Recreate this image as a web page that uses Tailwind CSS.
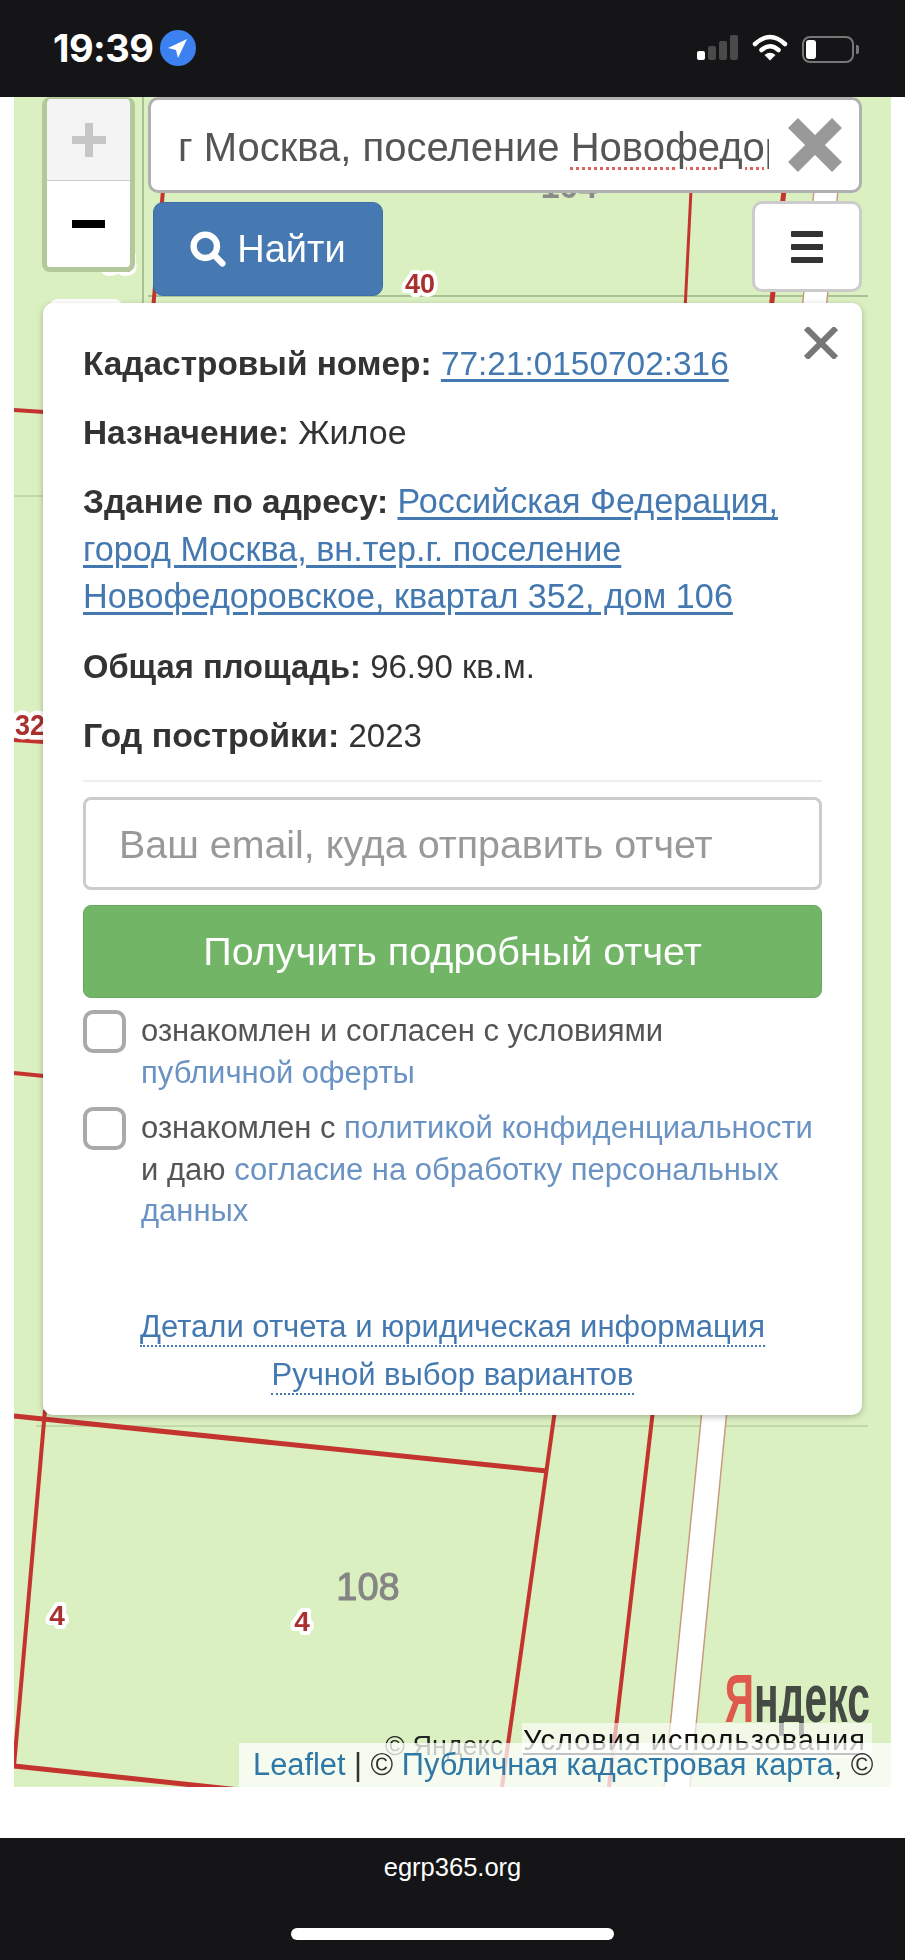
<!DOCTYPE html>
<html lang="ru">
<head>
    <meta charset="UTF-8">
    <meta name="viewport" content="width=device-width, initial-scale=1.0">
    <title>egrp365.org</title>
    <script src="https://cdn.jsdelivr.net/npm/@tailwindcss/browser@4"></script>
</head>
<body class="m-0 bg-white font-['Liberation_Sans',Arial,sans-serif]">
<div class="w-[905px] h-[1960px] overflow-hidden flex flex-col">

    <!-- status bar -->
    <div class="h-[97px] shrink-0 bg-[#151517] flex items-center pb-[1px] pl-[53px] pr-[46px] text-white">
        <span class="font-['Inter',sans-serif] font-bold text-[38px] leading-none tracking-[-0.5px]">19:39</span>
        <svg class="ml-[7px]" width="36" height="36" viewBox="0 0 36 36">
            <circle cx="18" cy="18" r="18" fill="#3b82f0"/>
            <path d="M8 18 L27 9 L18 28 L16 20 Z" fill="#fff"/>
        </svg>
        <div class="ml-auto flex items-center gap-[14px]">
            <div class="flex items-end gap-[3px] h-[26px] mt-[-2px]">
                <div class="w-[8px] h-[9px] rounded-[2px] bg-white"></div>
                <div class="w-[8px] h-[14px] rounded-[2px] bg-[#4a4a4a]"></div>
                <div class="w-[8px] h-[19px] rounded-[2px] bg-[#4a4a4a]"></div>
                <div class="w-[8px] h-[25px] rounded-[2px] bg-[#4a4a4a]"></div>
            </div>
            <svg width="36" height="28" viewBox="0 0 36 28" class="mt-[-2px]">
                <path d="M3 11 Q18 -3 33 11" fill="none" stroke="#fff" stroke-width="4.5" stroke-linecap="round"/>
                <path d="M9.5 17 Q18 9.5 26.5 17" fill="none" stroke="#fff" stroke-width="4.5" stroke-linecap="round"/>
                <path d="M12.5 22 Q18 17.5 23.5 22 L18 27.5 Z" fill="#fff"/>
            </svg>
            <div class="flex items-center gap-[2px] mt-[2px]">
                <div class="w-[52px] h-[27px] rounded-[8px] border-2 border-[#777] p-[2px]">
                    <div class="w-[10px] h-full rounded-[3px] bg-white"></div>
                </div>
                <div class="w-[3px] h-[9px] rounded-r-[2px] bg-[#777]"></div>
            </div>
        </div>
    </div>

    <!-- map -->
    <div class="relative mx-[14px] h-[1690px] shrink-0 overflow-hidden bg-[#dbf0c1]">
        <svg class="absolute inset-0" width="877" height="1690" viewBox="14 97 877 1690">
            <g stroke="#5e7a4e" stroke-width="1" opacity="0.8">
                <line x1="143" y1="97" x2="143" y2="303"/>
                <line x1="148" y1="296" x2="868" y2="296"/>
                <line x1="14" y1="496" x2="43" y2="496" opacity="0.5"/>
                <line x1="36" y1="1426" x2="868" y2="1426" opacity="0.5"/>
            </g>
            <!-- road -->
            <path d="M814 190 L838 190 L826 310 L802 310 Z" fill="#fff"/>
            <path d="M702 1410 L727 1410 L690 1787 L664 1787 Z" fill="#fff"/>
            <g stroke="#c89a80" stroke-width="1.5" fill="none">
                <line x1="814" y1="190" x2="802" y2="310"/>
                <line x1="838" y1="190" x2="826" y2="310"/>
                <line x1="702" y1="1410" x2="664" y2="1787"/>
                <line x1="727" y1="1410" x2="690" y2="1787"/>
            </g>
            <!-- parcels -->
            <g stroke="#c4342f" stroke-width="4" fill="none" class="blur-[0.6px]">
                <line x1="163" y1="190" x2="153" y2="310"/>
                <line x1="691" y1="190" x2="685" y2="310" stroke-width="3"/>
                <line x1="784" y1="190" x2="771" y2="310" stroke-width="5"/>
                <line x1="14" y1="410" x2="44" y2="412"/>
                <line x1="14" y1="740" x2="44" y2="742"/>
                <line x1="14" y1="1073" x2="44" y2="1076"/>
                <line x1="14" y1="1416" x2="547" y2="1471" stroke-width="5"/>
                <line x1="45" y1="1410" x2="14" y2="1766"/>
                <line x1="555" y1="1410" x2="502" y2="1787"/>
                <line x1="653" y1="1410" x2="609" y2="1787"/>
                <line x1="14" y1="1766" x2="240" y2="1790" stroke-width="5"/>
            </g>
            <!-- labels -->
            <g font-family="Liberation Sans, Arial, sans-serif" text-anchor="middle" font-weight="700" paint-order="stroke" class="blur-[0.4px]">
                <text x="569" y="198" font-size="34" fill="#8a8a8a">104</text>
                <text x="368" y="1600" font-size="38" font-weight="400" fill="#858585" stroke="#858585" stroke-width="1">108</text>
                <text x="420" y="293" font-size="28" fill="#a8302e" stroke="#fff" stroke-width="8" stroke-linejoin="round" textLength="30" lengthAdjust="spacingAndGlyphs">40</text>
                <text x="118" y="272" font-size="28" fill="#a8302e" stroke="#fff" stroke-width="8" stroke-linejoin="round">33</text>
                <text x="30" y="735" font-size="30" fill="#a8302e" stroke="#fff" stroke-width="9" stroke-linejoin="round" textLength="30" lengthAdjust="spacingAndGlyphs">32</text>
                <text x="57" y="1625" font-size="28" fill="#a8302e" stroke="#fff" stroke-width="8" stroke-linejoin="round">4</text>
                <text x="302" y="1631" font-size="28" fill="#a8302e" stroke="#fff" stroke-width="8" stroke-linejoin="round">4</text>
            </g>
            <rect x="50" y="299" width="72" height="12" rx="8" fill="#fff"/>
        </svg>

        <!-- attribution -->
        <div class="absolute right-[21px] top-[1557px] origin-right scale-x-[0.6] text-[68px] leading-[88px] font-bold whitespace-nowrap text-[#454a45] blur-[0.5px]"><span class="text-[#df5a4c]">Я</span>ндекс</div>
        <div class="absolute left-[371px] top-[1632px] text-[27px] leading-[34px] text-[#222] whitespace-nowrap">© Яндекс</div>
        <div class="absolute left-[508px] top-[1626px] w-[350px] h-[35px] bg-white/60 px-[1px] text-[29px] leading-[34px] tracking-[1px] text-[#111] whitespace-nowrap overflow-hidden"><span class="underline underline-offset-[3px]">Условия использования</span></div>
        <div class="absolute right-0 bottom-0 w-[652px] h-[44px] bg-white/75 pl-[14px] text-[30.8px] leading-[44px] text-[#333] whitespace-nowrap"><span class="text-[#2f78a6]">Leaflet</span> | © <span class="text-[#2f78a6]">Публичная кадастровая карта</span>, ©</div>

        <!-- controls over map -->
        <div class="relative pl-[28px] pr-[29px]">
            <div class="flex items-start">
                <div class="w-[93px] h-[175px] shrink-0 rounded-[8px] border-[5px] border-t-[2px] border-[#b3c99b] flex flex-col overflow-hidden">
                    <div class="h-[82px] bg-[#f4f4f4] border-b border-[#ccc] flex items-center justify-center">
                        <svg width="34" height="34" viewBox="0 0 34 34"><path d="M0 17 H34 M17 0 V34" stroke="#c6c6c6" stroke-width="8"/></svg>
                    </div>
                    <div class="flex-1 bg-white flex items-center justify-center">
                        <div class="w-[33px] h-[8px] bg-black"></div>
                    </div>
                </div>
                <div class="ml-[13px] flex-1 flex flex-col">
                    <div class="h-[96px] bg-white rounded-[10px] border-[3px] border-[#b0b0b0] flex items-center pl-[27px] pr-[17px]">
                        <div class="w-[591px] pt-[4px] overflow-hidden whitespace-nowrap text-[40px] leading-[50px] text-[#555]">г Москва, поселение <span class="underline decoration-dotted decoration-[#e0605a] decoration-[3px] underline-offset-[6px]">Новофедоровское</span></div>
                        <svg class="ml-auto" width="54" height="54" viewBox="0 0 54 54"><path d="M5 5 L49 49 M49 5 L5 49" stroke="#999" stroke-width="14"/></svg>
                    </div>
                    <div class="flex items-start justify-between mt-[8px]">
                        <button class="mt-[1px] ml-[5px] w-[230px] h-[94px] rounded-[10px] bg-[#4678b2] border border-[#3f6ea6] flex items-center justify-center gap-[11px] text-white text-[38px]">
                            <svg width="36" height="36" viewBox="0 0 40 40"><circle cx="17" cy="17" r="13" fill="none" stroke="#fff" stroke-width="7"/><path d="M27 27 L36 36" stroke="#fff" stroke-width="7" stroke-linecap="round"/></svg>
                            Найти
                        </button>
                        <button class="w-[110px] h-[91px] rounded-[10px] bg-white border-[3px] border-[#ccc] flex flex-col items-center justify-center gap-[7px]">
                            <span class="block w-[32px] h-[6px] rounded-[1px] bg-[#333]"></span>
                            <span class="block w-[32px] h-[6px] rounded-[1px] bg-[#333]"></span>
                            <span class="block w-[32px] h-[6px] rounded-[1px] bg-[#333]"></span>
                        </button>
                    </div>
                </div>
            </div>

            <!-- popup -->
            <div class="relative mt-[7px] ml-[1px] h-[1112px] rounded-[10px] bg-white shadow-[0_2px_6px_rgba(0,0,0,0.25)] px-[40px] pt-[37px] text-[#333]">
                <svg class="absolute right-[24px] top-[24px]" width="34" height="32" viewBox="0 0 34 32"><path d="M2 1 L32 31 M32 1 L2 31" stroke="#777" stroke-width="6"/></svg>
                <div class="text-[33.4px] leading-[47.5px] flex flex-col gap-[21.7px]">
                    <p><b>Кадастровый номер:</b> <a class="text-[#4478b0] underline underline-offset-[4px]">77:21:0150702:316</a></p>
                    <p><b>Назначение:</b> <span class="text-[34px]">Жилое</span></p>
                    <p><b>Здание по адресу:</b> <a class="text-[34.2px] text-[#4478b0] underline underline-offset-[4px]">Российская Федерация, город Москва, вн.тер.г. поселение Новофедоровское, квартал 352, дом 106</a></p>
                    <p><b class="text-[32.7px]">Общая площадь:</b> <span class="text-[33px]">96.90 кв.м.</span></p>
                    <p><b class="text-[33.9px]">Год постройки:</b> <span class="text-[33px]">2023</span></p>
                </div>
                <div class="mt-[21px] h-[2px] bg-[#eee]"></div>
                <input class="mt-[15px] block w-full h-[93px] rounded-[8px] border-[3px] border-[#ccc] pl-[33px] pt-[2px] text-[39.4px] placeholder:text-[#999] bg-white" placeholder="Ваш email, куда отправить отчет">
                <button class="mt-[15px] block w-full h-[93px] rounded-[8px] bg-[#72b566] border border-[#68a95c] text-white text-[39.5px]">Получить подробный отчет</button>
                <div class="mt-[12px] flex items-start gap-[15px] text-[31px] leading-[41.5px] text-[#555]">
                    <input type="checkbox" class="appearance-none size-[43px] shrink-0 rounded-[10px] border-4 border-[#aaa] bg-white">
                    <div>ознакомлен и согласен с условиями <a class="text-[#6a93c4]">публичной оферты</a></div>
                </div>
                <div class="mt-[14px] flex items-start gap-[15px] text-[31px] leading-[41.5px] text-[#555]">
                    <input type="checkbox" class="appearance-none size-[43px] shrink-0 rounded-[10px] border-4 border-[#aaa] bg-white">
                    <div>ознакомлен с <a class="text-[#6a93c4]">политикой конфиденциальности</a> и даю <a class="text-[#6a93c4]">согласие на обработку персональных данных</a></div>
                </div>
                <div class="mt-[71px] text-center text-[31px] leading-[48px] text-[#4478b0]">
                    <div><a class="border-b-2 border-dotted border-[#4478b0] pb-[1px]">Детали отчета и юридическая информация</a></div>
                    <div><a class="border-b-2 border-dotted border-[#4478b0] pb-[1px]">Ручной выбор вариантов</a></div>
                </div>
            </div>
        </div>
    </div>

    <div class="h-[51px] shrink-0 bg-white"></div>

    <!-- browser bar -->
    <div class="flex-1 bg-[#151517] flex flex-col items-center text-white">
        <div class="mt-[13px] text-[25.5px] leading-[32px]">egrp365.org</div>
        <div class="mt-[45px] w-[323px] h-[12px] rounded-full bg-white"></div>
    </div>
</div>
</body>
</html>
